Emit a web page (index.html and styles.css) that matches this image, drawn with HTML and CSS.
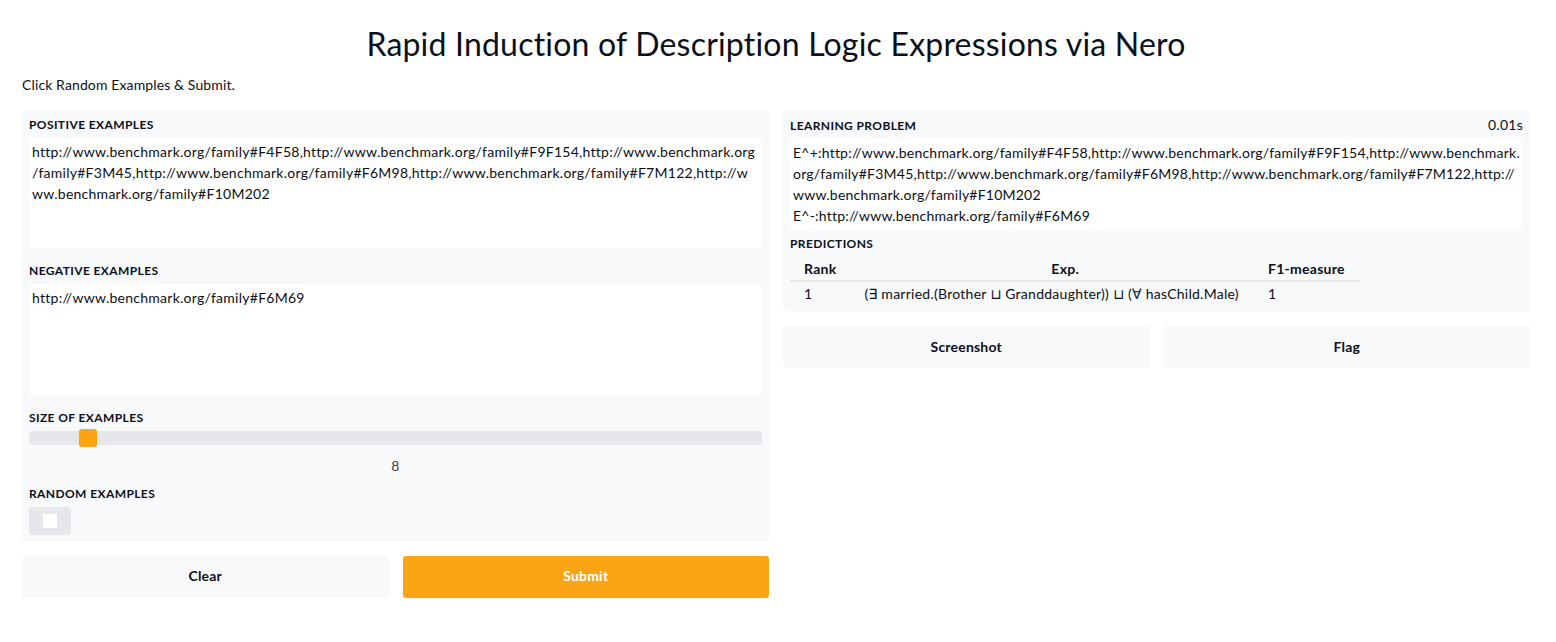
FILE: index.html
```html
<!DOCTYPE html>
<html lang="en">
<head>
<meta charset="utf-8">
<title>Nero</title>
<link rel="stylesheet" href="styles.css">
</head>
<body>
<div class="app">
  <h1 class="title">Rapid Induction of Description Logic Expressions via Nero</h1>
  <p class="desc">Click Random Examples &amp; Submit.</p>
  <div class="cols">
    <div class="col">
      <div class="panel">
        <label class="block">
          <span class="lbl">Positive Examples</span>
          <textarea class="ta" spellcheck="false">http://www.benchmark.org/family#F4F58,http://www.benchmark.org/family#F9F154,http://www.benchmark.org/family#F3M45,http://www.benchmark.org/family#F6M98,http://www.benchmark.org/family#F7M122,http://www.benchmark.org/family#F10M202</textarea>
        </label>
        <label class="block">
          <span class="lbl">Negative Examples</span>
          <textarea class="ta ta2" spellcheck="false">http://www.benchmark.org/family#F6M69</textarea>
        </label>
        <div class="block">
          <span class="lbl">Size of Examples</span>
          <div class="track"><span class="thumb"></span></div>
          <div class="val">8</div>
        </div>
        <div class="block rand">
          <span class="lbl">Random Examples</span>
          <div class="check"><span class="box"></span></div>
        </div>
      </div>
      <div class="btnrow">
        <button class="btn">Clear</button>
        <button class="btn primary">Submit</button>
      </div>
    </div>
    <div class="col">
      <div class="panel">
        <div class="lblrow"><span class="lbl">Learning Problem</span><span class="time">0.01s</span></div>
        <div class="out">E^+:http://www.benchmark.org/family#F4F58,http://www.benchmark.org/family#F9F154,http://www.benchmark.org/family#F3M45,http://www.benchmark.org/family#F6M98,http://www.benchmark.org/family#F7M122,http://www.benchmark.org/family#F10M202<br>E^-:http://www.benchmark.org/family#F6M69</div>
        <span class="lbl plbl">Predictions</span>
        <table class="tbl">
          <thead>
            <tr><th class="c1">Rank</th><th class="c2">Exp.</th><th class="c3">F1-measure</th></tr>
          </thead>
          <tbody>
            <tr><td class="c1">1</td><td class="c2">(∃ married.(Brother ⊔ Granddaughter)) ⊔ (∀ hasChild.Male)</td><td class="c3">1</td></tr>
          </tbody>
        </table>
      </div>
      <div class="btnrow btnrow-r">
        <button class="btn">Screenshot</button>
        <button class="btn">Flag</button>
      </div>
    </div>
  </div>
</div>
</body>
</html>
```
FILE: styles.css
```css
* { box-sizing: border-box; }
body {
  margin: 0;
  font-family: Lato, "Noto Sans", "DejaVu Sans", sans-serif;
  color: #0b0f19;
  background: #fff;
  font-size: 14px;
  letter-spacing: 0.26px;
}
.app { padding: 0 26px 0 22px; }
.title {
  margin: 24px 0 0;
  font-size: 32px;
  line-height: 40px;
  font-weight: 400;
  letter-spacing: 0.2px;
  text-align: center;
}
.desc {
  margin: 11px 0 15px;
  line-height: 20px;
  font-size: 14px;
  letter-spacing: 0.12px;
}
.cols { display: flex; gap: 14px; align-items: flex-start; }
.col { flex: 1 1 0; min-width: 0; }
.panel {
  background: #f8f9fb;
  border-radius: 4px;
  padding: 7px;
  display: flex;
  flex-direction: column;
}
.block { display: flex; flex-direction: column; }
.block + .block { margin-top: 14px; }
.lbl {
  display: block;
  font-size: 12px;
  line-height: 16px;
  font-weight: 700;
  letter-spacing: 0.4px;
  text-transform: uppercase;
  margin-bottom: 5px;
}
.ta {
  display: block;
  width: 100%;
  height: 111px;
  border: none;
  border-radius: 3px;
  background: #fff;
  padding: 3px 6px 3px 3px;
  font: inherit;
  font-size: 14px;
  line-height: 21px;
  letter-spacing: 0.26px;
  color: #0b0f19;
  resize: none;
  outline: none;
}
.ta2 { height: 112px; }
.track {
  height: 14px;
  background: #e5e7eb;
  border-radius: 4px;
  display: flex;
  align-items: center;
}
.thumb {
  width: 18px;
  height: 18px;
  margin-left: 50px;
  background: #fba514;
  border-radius: 3px;
}
.val {
  text-align: center;
  line-height: 16px;
  margin-top: 13px;
  color: #374151;
}
.block.rand { margin-top: 12px; }
.check {
  width: 42px;
  height: 28px;
  background: #e5e7eb;
  border-radius: 3px;
  display: flex;
  align-items: center;
  justify-content: center;
}
.box { width: 14px; height: 14px; background: #fff; }
.btnrow { display: flex; gap: 14px; margin-top: 14px; }
.btnrow-r { margin-top: 15px; }
.btn {
  flex: 1 1 0;
  height: 42px;
  border: none;
  border-radius: 3px;
  background: #f8f9fb;
  font: inherit;
  font-size: 14px;
  font-weight: 700;
  letter-spacing: 0.2px;
  color: #0b0f19;
  padding: 0 0 3px;
}
.btnrow-r .btn { padding: 0 0 1px; }
.btn.primary { background: #fba514; color: #fff; }
.lblrow { display: flex; justify-content: space-between; align-items: baseline; }
.time { font-size: 14px; line-height: 16px; }
.out {
  background: #fff;
  border-radius: 3px;
  padding: 3px 1px 3px 3px;
  line-height: 21px;
  letter-spacing: 0.22px;
  word-break: break-all;
}
.plbl { margin-top: 7px; margin-bottom: 4px; }
.tbl {
  border-collapse: collapse;
  width: 569px;
}
.tbl th { font-weight: 700; height: 25px; border-bottom: 2px solid #e5e7eb; padding: 0 14px; }
.tbl td { height: 23px; padding: 0 14px; }
.tbl .c1 { width: 60px; text-align: left; }
.tbl th.c2 { text-align: center; padding-left: 40px; }
.tbl td.c2 { text-align: left; }
.tbl .c3 { width: 105px; text-align: left; }
```
